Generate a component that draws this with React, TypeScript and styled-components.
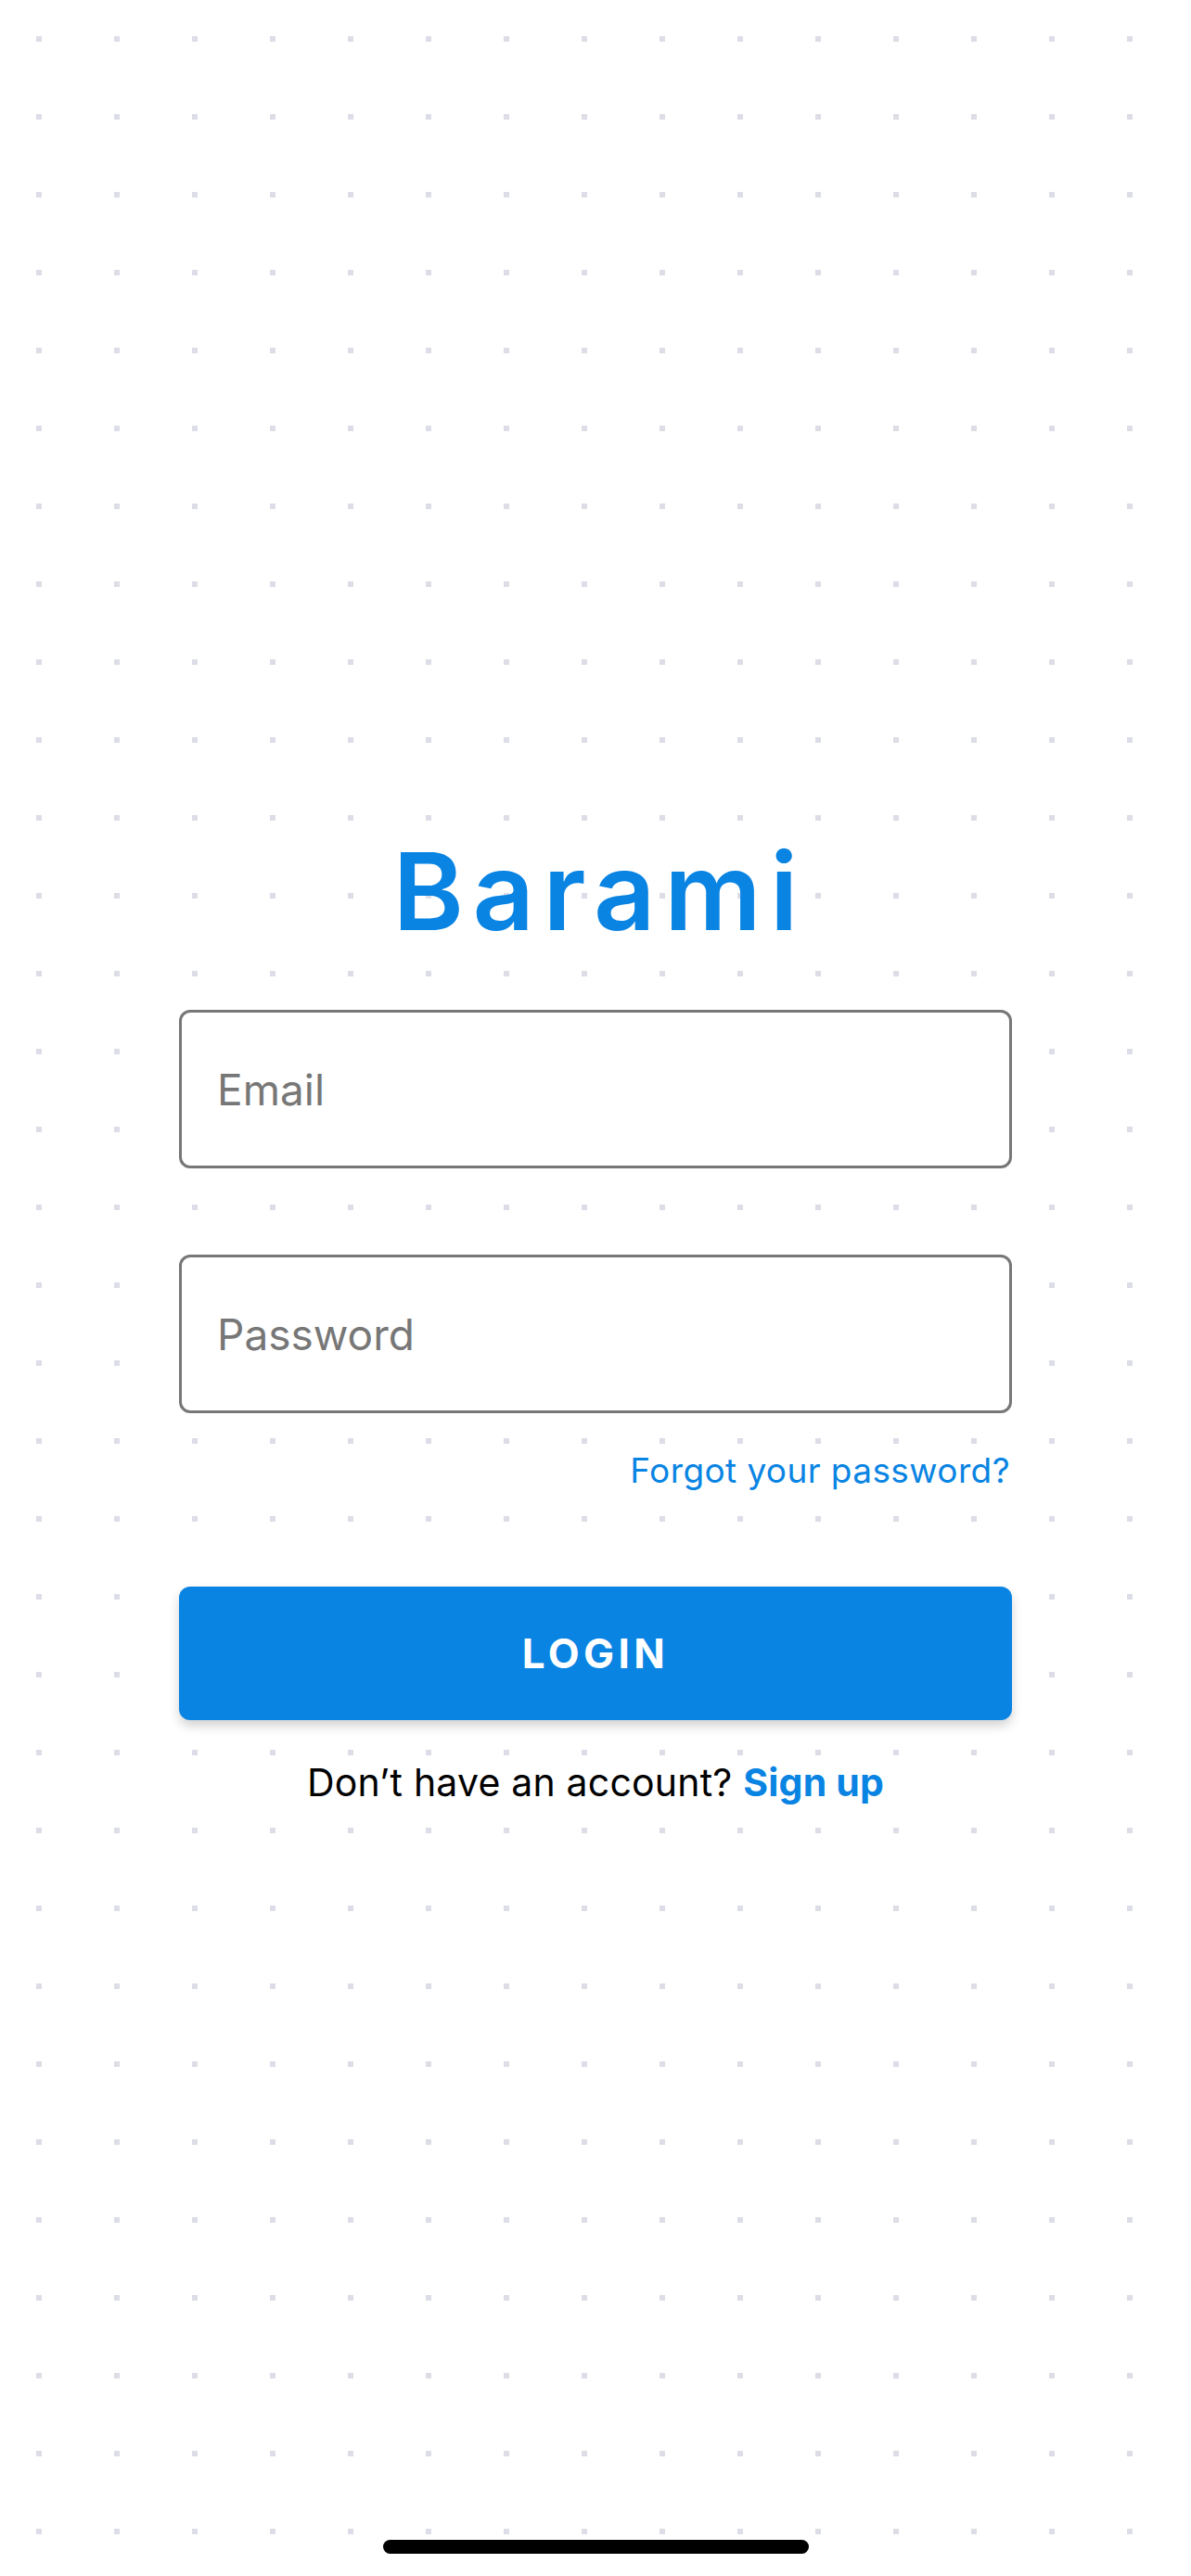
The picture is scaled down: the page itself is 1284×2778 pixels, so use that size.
import styled, { createGlobalStyle } from 'styled-components';

const BLUE = '#0984e3';

const GlobalStyle = createGlobalStyle`
  html, body {
    margin: 0;
    padding: 0;
    background: #ffffff;
  }
  body {
    font-family: Inter, "Noto Sans", "Liberation Sans", sans-serif;
    -webkit-font-smoothing: antialiased;
  }
  * {
    box-sizing: border-box;
  }
`;

const Screen = styled.div`
  position: relative;
  width: 1284px;
  min-height: 2778px;
  background-color: #dcdde6;
  background-image:
    linear-gradient(90deg, transparent 6px, #ffffff 6px),
    linear-gradient(180deg, transparent 6px, #ffffff 6px);
  background-size: 84px 84px;
  background-position: 39px 39px;
  display: flex;
  flex-direction: column;
  align-items: center;
  padding-top: 903px;
`;

const Title = styled.h1`
  margin: 0 -9.5px 70px 0;
  font-size: 116px;
  line-height: 116px;
  font-weight: 600;
  letter-spacing: 9.5px;
  color: ${BLUE};
`;

const Form = styled.form`
  width: 898px;
  display: flex;
  flex-direction: column;
`;

const Field = styled.input<{ $gap?: number }>`
  height: 171px;
  width: 100%;
  margin-bottom: ${({ $gap }) => $gap ?? 0}px;
  padding: 0 38px;
  border: 3px solid #777777;
  border-radius: 12px;
  background: #ffffff;
  font-family: inherit;
  font-size: 46px;
  color: #222222;
  outline: none;
  &::placeholder {
    color: #777777;
  }
`;

const Forgot = styled.a`
  align-self: flex-end;
  margin: 40px 2px 103px 0;
  font-size: 37px;
  line-height: 44px;
  letter-spacing: 0.4px;
  color: ${BLUE};
  text-decoration: none;
`;

const LoginButton = styled.button`
  height: 144px;
  width: 100%;
  border: none;
  border-radius: 12px;
  background: ${BLUE};
  box-shadow: 0 6px 12px rgba(0, 0, 0, 0.18);
  color: #ffffff;
  font-family: inherit;
  font-size: 44px;
  font-weight: 700;
  letter-spacing: 0.1em;
  cursor: pointer;
`;

const SignupLine = styled.p`
  margin: 43px 0 0;
  font-size: 41px;
  line-height: 48px;
  letter-spacing: 0.2px;
  color: #000000;
  text-align: center;
`;

const SignupLink = styled.a`
  color: ${BLUE};
  font-weight: 700;
  text-decoration: none;
`;

const HomeIndicator = styled.div`
  position: absolute;
  left: 413px;
  top: 2739px;
  width: 459px;
  height: 15px;
  border-radius: 8px;
  background: #000000;
`;

export default function App() {
  return (
    <>
      <GlobalStyle />
      <Screen>
        <Title>Barami</Title>
        <Form onSubmit={(e) => e.preventDefault()}>
          <Field type="email" placeholder="Email" $gap={93} />
          <Field type="password" placeholder="Password" />
          <Forgot href="#">Forgot your password?</Forgot>
          <LoginButton type="submit">LOGIN</LoginButton>
        </Form>
        <SignupLine>
          Don’t have an account? <SignupLink href="#">Sign up</SignupLink>
        </SignupLine>
        <HomeIndicator />
      </Screen>
    </>
  );
}
